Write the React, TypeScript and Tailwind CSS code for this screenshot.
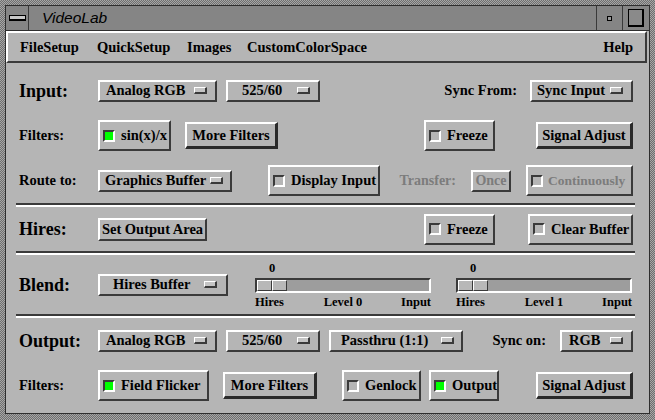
import React from 'react';

const RAISED = 'border-2 border-t-white border-l-white border-r-[#3a3a3a] border-b-[#3a3a3a]';
const SUNKEN = 'border-2 border-t-[#3a3a3a] border-l-[#3a3a3a] border-r-white border-b-white';

type OptProps = { label: string; w: string; pl: string; pr: string };

const OptionMenu = ({ label, w, pl, pr }: OptProps) => (
  <div className={`flex items-center h-[22px] shrink-0 ${RAISED} ${w} ${pl} ${pr}`}>
    <span className="text-[14.5px] leading-none whitespace-nowrap">{label}</span>
    <span className="flex-1" />
    <span className="w-[13px] h-[7px] shrink-0 border-t border-l border-b-2 border-r-2 border-t-white border-l-white border-b-[#3a3a3a] border-r-[#3a3a3a] bg-[#c4c4c4]" />
  </div>
);

type ToggleProps = { label: string; w: string; on?: boolean; disabled?: boolean };

const Toggle = ({ label, w, on, disabled }: ToggleProps) => (
  <div className={`flex items-center h-[31px] pl-[3px] shrink-0 ${RAISED} ${w}`}>
    <span className={`w-[12px] h-[12px] shrink-0 ${SUNKEN} ${on ? 'bg-[#00ff00]' : 'bg-[#b5b5b5]'}`} />
    <span
      className={`leading-none whitespace-nowrap ${disabled ? 'ml-[5px] text-[13.5px] text-[#7c7c7c]' : 'ml-[6px] text-[14.5px]'}`}
    >
      {label}
    </span>
  </div>
);

const Push = ({ label, w }: { label: string; w: string }) => (
  <div
    className={`flex items-center justify-center h-[27px] shrink-0 border-t-2 border-l-2 border-b-[3px] border-r-[3px] border-t-white border-l-white border-b-[#2a2a2a] border-r-[#2a2a2a] text-[14.5px] leading-none whitespace-nowrap ${w}`}
  >
    {label}
  </div>
);

const Slider = ({ level, ml }: { level: string; ml: string }) => (
  <div className={`flex flex-col w-[176px] shrink-0 ${ml}`}>
    <div className="w-[34px] h-[14px] text-center text-[12.5px] leading-[14px]">0</div>
    <div className={`mt-[3px] h-[15px] flex ${SUNKEN} bg-[#9d9d9d]`}>
      <div className="w-[30px] flex">
        <div className="flex-1 border border-t-white border-l-white border-r-[#3a3a3a] border-b-[#3a3a3a] bg-[#b8b8b8]" />
        <div className="flex-1 border border-t-white border-l-white border-r-[#3a3a3a] border-b-[#3a3a3a] bg-[#b8b8b8]" />
      </div>
    </div>
    <div className="mt-[2px] grid grid-cols-3 text-[12.5px] leading-[14px]">
      <span className="text-left">Hires</span>
      <span className="text-center whitespace-nowrap">Level {level}</span>
      <span className="text-right">Input</span>
    </div>
  </div>
);

const Sep = () => (
  <div className="ml-[10px] mr-[14px] h-[4px] border-t-2 border-b-2 border-t-[#3a3a3a] border-b-white" />
);

const BigLabel = ({ text }: { text: string }) => (
  <span className="w-[79px] shrink-0 text-[18px] leading-none">{text}</span>
);

const SmallLabel = ({ text }: { text: string }) => (
  <span className="w-[79px] shrink-0 text-[14.5px] leading-none">{text}</span>
);

export default function App() {
  return (
    <div className="w-[655px] h-[420px] pt-[5px] pl-[5px] pr-[5px] pb-[6px] flex bg-[repeating-conic-gradient(#6f6f6f_0%_25%,#a6a6a6_0%_50%)] bg-[length:2px_2px] font-['Liberation_Serif',serif] font-bold text-black overflow-hidden">
      <div className="flex-1 flex flex-col border border-[#2e2e2e] bg-[#b5b5b5]">
        {/* title bar */}
        <div className="flex h-[25px] shrink-0 bg-[#858585] border-b border-[#2e2e2e]">
          <div className="w-[23px] flex items-center justify-center border-r border-[#3a3a3a]">
            <div className="w-[17px] h-[6px] border border-b-2 border-black bg-[#c8c8c8]" />
          </div>
          <span className="pl-[13px] font-['Liberation_Sans',sans-serif] font-normal italic text-[15.5px] leading-[24px]">
            VideoLab
          </span>
          <span className="flex-1" />
          <div className="w-[26px] flex items-center justify-center border-l border-[#3a3a3a]">
            <div className="w-[5px] h-[5px] border border-black bg-[#9a9a9a]" />
          </div>
          <div className="w-[27px] flex items-center justify-center border-l border-[#3a3a3a]">
            <div className="w-[16px] h-[18px] border border-r-2 border-b-2 border-black bg-[#8a8a8a]" />
          </div>
        </div>

        {/* menu bar */}
        <div className="flex items-center h-[32px] shrink-0 mr-[2px] pl-[12px] pr-[12px] text-[14.5px] leading-none border-2 border-t-white border-l-white border-b-[#3a3a3a] border-r-[#3a3a3a]">
          <span className="w-[77px]">FileSetup</span>
          <span className="w-[90px]">QuickSetup</span>
          <span className="w-[60px]">Images</span>
          <span>CustomColorSpace</span>
          <span className="ml-auto">Help</span>
        </div>

        {/* form */}
        <div className="flex-1 flex flex-col pt-[5px]">
          <div className="flex items-center h-[45px] pl-[13px] pr-[16px]">
            <BigLabel text="Input:" />
            <OptionMenu label="Analog RGB" w="w-[119px]" pl="pl-[6px]" pr="pr-[8px]" />
            <div className="ml-[9px]">
              <OptionMenu label="525/60" w="w-[94px]" pl="pl-[14px]" pr="pr-[8px]" />
            </div>
            <span className="ml-auto text-[14.5px] leading-none">Sync From:</span>
            <div className="ml-[13px]">
              <OptionMenu label="Sync Input" w="w-[103px]" pl="pl-[5px]" pr="pr-[8px]" />
            </div>
          </div>

          <div className="flex items-center h-[45px] pl-[13px] pr-[16px]">
            <SmallLabel text="Filters:" />
            <Toggle label="sin(x)/x" w="w-[73px]" on />
            <div className="ml-[14px]">
              <Push label="More Filters" w="w-[93px]" />
            </div>
            <div className="ml-auto">
              <Toggle label="Freeze" w="w-[71px]" />
            </div>
            <div className="ml-[41px]">
              <Push label="Signal Adjust" w="w-[97px]" />
            </div>
          </div>

          <div className="flex items-center h-[45px] pl-[13px] pr-[16px]">
            <SmallLabel text="Route to:" />
            <OptionMenu label="Graphics Buffer" w="w-[134px]" pl="pl-[5px]" pr="pr-[7px]" />
            <div className="ml-[36px]">
              <Toggle label="Display Input" w="w-[112px]" />
            </div>
            <span className="ml-auto text-[14px] leading-none text-[#7c7c7c]">Transfer:</span>
            <div
              className={`ml-[15px] w-[40px] h-[22px] flex items-center justify-center text-[14px] leading-none text-[#7c7c7c] ${RAISED}`}
            >
              Once
            </div>
            <div className="ml-[15px]">
              <Toggle label="Continuously" w="w-[107px]" disabled />
            </div>
          </div>

          <Sep />

          <div className="flex items-center h-[44px] pl-[13px] pr-[16px]">
            <BigLabel text="Hires:" />
            <div className={`w-[109px] h-[23px] flex items-center justify-center text-[14.5px] leading-none whitespace-nowrap ${RAISED}`}>
              Set Output Area
            </div>
            <div className="ml-auto">
              <Toggle label="Freeze" w="w-[71px]" />
            </div>
            <div className="ml-[33px]">
              <Toggle label="Clear Buffer" w="w-[105px]" />
            </div>
          </div>

          <Sep />

          <div className="flex items-center h-[59px] pl-[13px] pr-[16px]">
            <BigLabel text="Blend:" />
            <OptionMenu label="Hires Buffer" w="w-[130px]" pl="pl-[13px]" pr="pr-[9px]" />
            <Slider level="0" ml="ml-[27px]" />
            <Slider level="1" ml="ml-[25px]" />
          </div>

          <Sep />

          <div className="flex items-center h-[45px] pl-[13px] pr-[16px]">
            <BigLabel text="Output:" />
            <OptionMenu label="Analog RGB" w="w-[119px]" pl="pl-[6px]" pr="pr-[8px]" />
            <div className="ml-[9px]">
              <OptionMenu label="525/60" w="w-[94px]" pl="pl-[14px]" pr="pr-[8px]" />
            </div>
            <div className="ml-[9px]">
              <OptionMenu label="Passthru (1:1)" w="w-[134px]" pl="pl-[10px]" pr="pr-[7px]" />
            </div>
            <span className="ml-auto text-[14.5px] leading-none">Sync on:</span>
            <div className="ml-[14px]">
              <OptionMenu label="RGB" w="w-[73px]" pl="pl-[7px]" pr="pr-[8px]" />
            </div>
          </div>

          <div className="flex items-center h-[45px] pl-[13px] pr-[16px]">
            <SmallLabel text="Filters:" />
            <Toggle label="Field Flicker" w="w-[111px]" on />
            <div className="ml-[14px]">
              <Push label="More Filters" w="w-[94px]" />
            </div>
            <div className="ml-[25px]">
              <Toggle label="Genlock" w="w-[79px]" />
            </div>
            <div className="ml-[8px]">
              <Toggle label="Output" w="w-[70px]" on />
            </div>
            <div className="ml-auto">
              <Push label="Signal Adjust" w="w-[97px]" />
            </div>
          </div>
        </div>
      </div>
    </div>
  );
}
